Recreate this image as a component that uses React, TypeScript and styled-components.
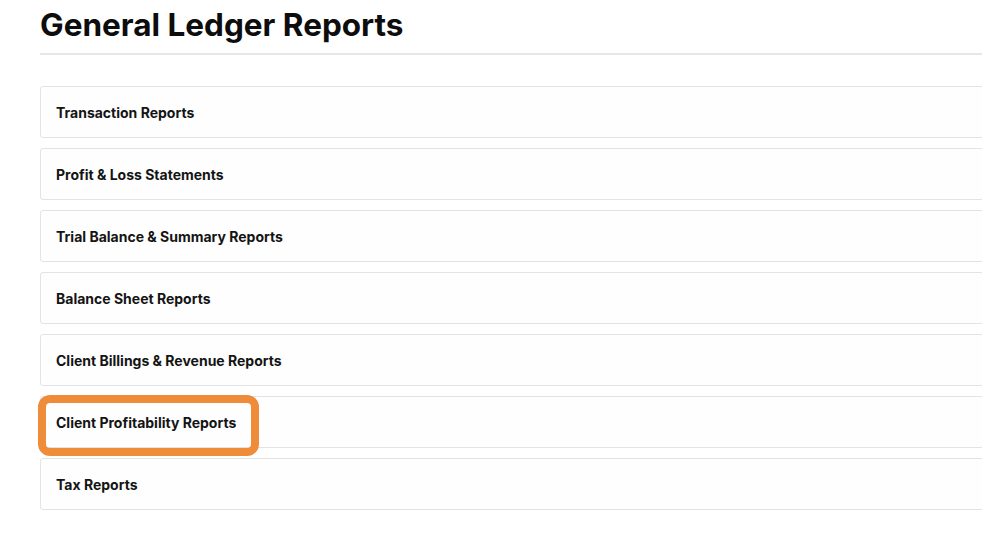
import React from "react";
import styled, { createGlobalStyle } from "styled-components";

const GlobalStyle = createGlobalStyle`
  html, body {
    margin: 0;
    padding: 0;
    background: #ffffff;
    font-family: Inter, "Noto Sans", sans-serif;
    color: #111111;
  }
`;

const Page = styled.div`
  width: 982px;
  height: 550px;
  overflow: hidden;
  padding-left: 40px;
  box-sizing: border-box;
`;

const Title = styled.h1`
  margin: 0;
  padding-top: 5px;
  height: 48px;
  font-size: 31.5px;
  font-weight: 700;
  letter-spacing: 0;
  line-height: 40px;
  color: #0d0d0d;
  border-bottom: 2px solid #e6e6e6;
`;

const List = styled.div`
  display: flex;
  flex-direction: column;
  gap: 10px;
  margin-top: 31px;
  width: 980px;
`;

const Card = styled.div`
  position: relative;
  height: 52px;
  box-sizing: border-box;
  border: 1px solid #e3e3e3;
  border-radius: 3px;
  background: #fefefe;
  display: flex;
  align-items: center;
  padding-left: 15px;
  font-size: 14px;
  font-weight: 700;
  color: #141414;
`;

const Highlight = styled.div`
  position: absolute;
  left: -3px;
  top: -2px;
  width: 221px;
  height: 61px;
  box-sizing: border-box;
  border: 8px solid #ee8c3a;
  border-radius: 12px;
  pointer-events: none;
`;

const reports = [
  "Transaction Reports",
  "Profit & Loss Statements",
  "Trial Balance & Summary Reports",
  "Balance Sheet Reports",
  "Client Billings & Revenue Reports",
  "Client Profitability Reports",
  "Tax Reports",
];

export default function App() {
  return (
    <Page>
      <GlobalStyle />
      <Title>General Ledger Reports</Title>
      <List>
        {reports.map((r) => (
          <Card key={r}>
            {r}
            {r === "Client Profitability Reports" && <Highlight />}
          </Card>
        ))}
      </List>
    </Page>
  );
}
